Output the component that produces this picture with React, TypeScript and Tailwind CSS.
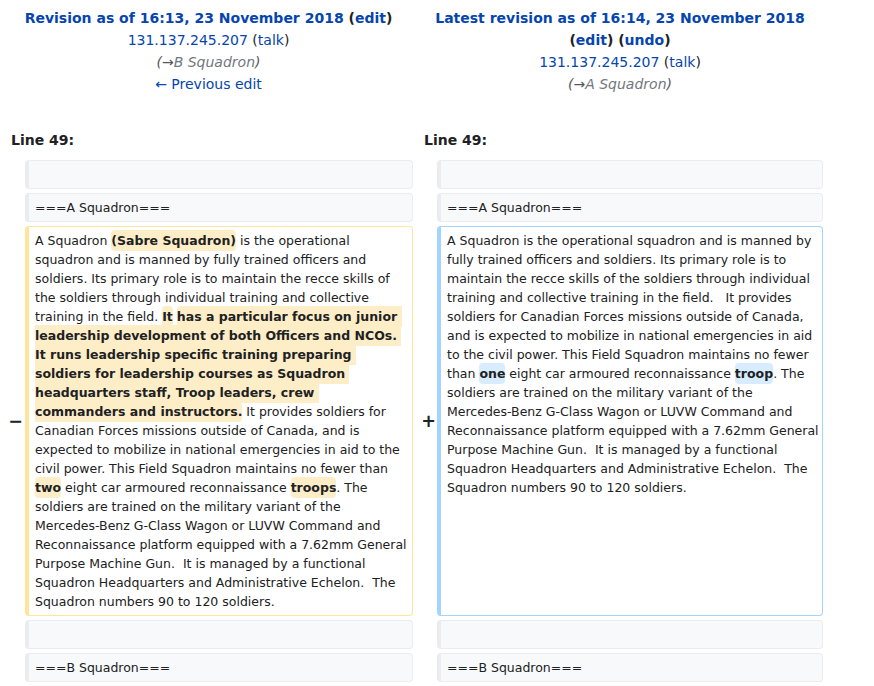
import React from "react";

const link = "text-[#0645ad]";

function Del({ children }: { children: React.ReactNode }) {
  return <span className="font-bold bg-[#feeec8] rounded-[4px] py-[3px]">{children}</span>;
}

function Ins({ children }: { children: React.ReactNode }) {
  return <span className="font-bold bg-[#d8ecff] rounded-[4px] py-[3px]">{children}</span>;
}

function Context({ text }: { text: string }) {
  return (
    <>
      <div />
      <div className="bg-[#f8f9fa] border border-[#eaecf0] border-l-4 rounded-[4px] pl-[6px] pr-[4px] py-[4px] text-[12.5px] leading-[19px] whitespace-pre-wrap min-h-[29px]">
        {text}
      </div>
      <div />
      <div className="bg-[#f8f9fa] border border-[#eaecf0] border-l-4 rounded-[4px] pl-[6px] pr-[2px] py-[4px] text-[12.5px] leading-[19px] whitespace-pre-wrap min-h-[29px]">
        {text}
      </div>
    </>
  );
}

function Comment({ section }: { section: string }) {
  return (
    <div className="italic text-[#54595d]">
      (→<span className="text-[#72777d]">{section}</span>)
    </div>
  );
}

export default function App() {
  return (
    <div className="bg-white min-h-screen font-['DejaVu_Sans',sans-serif] text-[#202122] text-[14px] leading-[22px]">
      <div className="grid grid-cols-[17px_388px_16px_386px] gap-1 pl-1 pt-[3px]">
        {/* titles */}
        <div className="col-span-2 text-center pt-[4px]">
          <div className="font-bold">
            <span className={link}>Revision as of 16:13, 23 November 2018</span> (<span className={link}>edit</span>)
          </div>
          <div>
            <span className={link}>131.137.245.207</span> (<span className={link}>talk</span>)
          </div>
          <Comment section="B Squadron" />
          <div className={link}>← Previous edit</div>
        </div>
        <div className="col-span-2 text-center pt-[4px]">
          <div className="font-bold">
            <span className={link}>Latest revision as of 16:14, 23 November 2018</span> (<span className={link}>edit</span>) (<span className={link}>undo</span>)
          </div>
          <div>
            <span className={link}>131.137.245.207</span> (<span className={link}>talk</span>)
          </div>
          <Comment section="A Squadron" />
        </div>

        {/* line numbers */}
        <div className="col-span-2 font-bold pl-[7px] pt-[30px] pb-[5px]">Line 49:</div>
        <div className="col-span-2 font-bold pl-[7px] pt-[30px] pb-[5px]">Line 49:</div>

        <Context text="" />
        <Context text="===A Squadron===" />

        {/* changed paragraph */}
        <div className="flex items-center justify-end font-bold text-[17.5px] leading-[21px] -mr-[2px]">−</div>
        <div className="bg-white border border-[#ffe49c] border-l-4 rounded-[4px] pl-[6px] pr-[4px] py-[4px] text-[12.5px] leading-[19px] whitespace-pre-wrap">
          A Squadron <Del>(Sabre Squadron)</Del> is the operational squadron and is manned by fully trained officers and soldiers. Its primary role is to maintain the recce skills of the soldiers through individual training and collective training in the field. <Del>It</Del> <Del>has a particular focus on junior leadership development of both Officers and NCOs. It runs leadership specific training preparing soldiers for leadership courses as Squadron headquarters staff, Troop leaders, crew commanders and instructors.</Del> It provides soldiers for Canadian Forces missions outside of Canada, and is expected to mobilize in national emergencies in aid to the civil power. This Field Squadron maintains no fewer than <Del>two</Del> eight car armoured reconnaissance <Del>troops</Del>. The soldiers are trained on the military variant of the Mercedes-Benz G-Class Wagon or LUVW Command and Reconnaissance platform equipped with a 7.62mm General Purpose Machine Gun.  It is managed by a functional Squadron Headquarters and Administrative Echelon.  The Squadron numbers 90 to 120 soldiers.
        </div>
        <div className="flex items-center justify-end font-bold text-[17.5px] leading-[21px] -mr-[3px]">+</div>
        <div className="bg-white border border-[#a3d3ff] border-l-4 rounded-[4px] pl-[6px] pr-[2px] py-[4px] text-[12.5px] leading-[19px] whitespace-pre-wrap">
          A Squadron is the operational squadron and is manned by fully trained officers and soldiers. Its primary role is to maintain the recce skills of the soldiers through individual training and collective training in the field.   It provides soldiers for Canadian Forces missions outside of Canada, and is expected to mobilize in national emergencies in aid to the civil power. This Field Squadron maintains no fewer than <Ins>one</Ins> eight car armoured reconnaissance <Ins>troop</Ins>. The soldiers are trained on the military variant of the Mercedes-Benz G-Class Wagon or LUVW Command and Reconnaissance platform equipped with a 7.62mm General Purpose Machine Gun.  It is managed by a functional Squadron Headquarters and Administrative Echelon.  The Squadron numbers 90 to 120 soldiers.
        </div>

        <Context text="" />
        <Context text="===B Squadron===" />
      </div>
    </div>
  );
}
